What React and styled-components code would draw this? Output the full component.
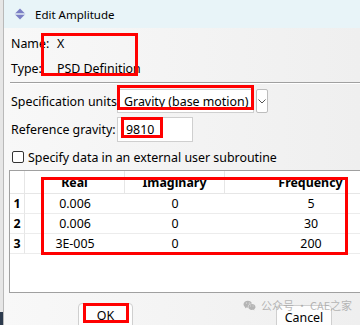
import styled, { createGlobalStyle } from "styled-components";
import { RiWechatFill } from "react-icons/ri";

const rows = [
  { id: 1, real: "0.006", imag: "0", freq: "5" },
  { id: 2, real: "0.006", imag: "0", freq: "30" },
  { id: 3, real: "3E-005", imag: "0", freq: "200" },
];

// red annotation boxes drawn over the dialog
const marks = [
  { top: 33, left: 41, width: 97, height: 43 },
  { top: 85, left: 117, width: 137, height: 25 },
  { top: 117, left: 121, width: 42, height: 21 },
  { top: 177, left: 41, width: 307, height: 78 },
  { top: 303, left: 83, width: 46, height: 20 },
];

const App = () => {
  return (
    <>
      <GlobalStyle />
      <Screen>
        <BackStrip />
        <Window>
          <TitleBar>
            <svg width="12" height="12" viewBox="0 0 12 12">
              <path d="M6 0.5 L11.5 6 L6 11.5 L0.5 6 Z" fill="#7b7fc4" />
              <path d="M0 6 H12" stroke="#e8f4f8" strokeWidth="1.4" />
            </svg>
            <span>Edit Amplitude</span>
          </TitleBar>

          <Info>
            <InfoRow>
              <Label>Name:</Label>
              <Value>X</Value>
            </InfoRow>
            <InfoRow>
              <Label>Type:</Label>
              <Value>PSD Definition</Value>
            </InfoRow>
          </Info>
          <Separator />

          <FieldRow>
            <FieldLabel>Specification units:</FieldLabel>
            <Combo>Gravity (base motion)</Combo>
            <ComboArrow>
              <svg width="8" height="5" viewBox="0 0 8 5">
                <path d="M0.5 0.5 L4 4 L7.5 0.5" fill="none" stroke="#555" strokeWidth="1" />
              </svg>
            </ComboArrow>
          </FieldRow>

          <FieldRow $gap={4}>
            <FieldLabel>Reference gravity:</FieldLabel>
            <TextInput>9810</TextInput>
          </FieldRow>

          <CheckRow>
            <CheckBox />
            <span>Specify data in an external user subroutine</span>
          </CheckRow>

          <Table>
            <HeadCell />
            <HeadCell>Real</HeadCell>
            <HeadCell>Imaginary</HeadCell>
            <HeadCell>Frequency</HeadCell>
            {rows.map((r) => (
              <Row key={r.id}>
                <RowNum>{r.id}</RowNum>
                <Cell>{r.real}</Cell>
                <Cell>{r.imag}</Cell>
                <Cell>{r.freq}</Cell>
              </Row>
            ))}
          </Table>

          <Buttons>
            <Button $width={55} $left={74}>OK</Button>
            <Button $width={56} $left={272} $top={2}>Cancel</Button>
          </Buttons>
        </Window>

        {marks.map((m, i) => (
          <Mark
            key={i}
            style={{ top: m.top, left: m.left, width: m.width, height: m.height }}
          />
        ))}

        <Watermark>
          <RiWechatFill size={13} />
          <span>公众号 · CAE之家</span>
        </Watermark>
      </Screen>
    </>
  );
};

const GlobalStyle = createGlobalStyle`
  * {
    margin: 0;
    padding: 0;
    box-sizing: border-box;
  }

  html, body {
    width: 360px;
    height: 325px;
    overflow: hidden;
    background: #dcdcdc;
    font-family: "Noto Sans", "Liberation Sans", sans-serif;
    font-size: 12.4px;
    color: #000;
  }
`;

const Screen = styled.div`
  position: relative;
  display: flex;
  width: 360px;
  height: 325px;
  overflow: hidden;
`;

const BackStrip = styled.div`
  width: 3px;
  flex-shrink: 0;
  background: linear-gradient(#e6e6e6 0, #e6e6e6 312px, #2d3b4e 312px);
`;

const Window = styled.div`
  flex: 1;
  display: flex;
  flex-direction: column;
  border-left: 1px solid #b9b9b9;
  background: linear-gradient(90deg, #f8f8f8, #efefef);
  overflow: hidden;
`;

const TitleBar = styled.div`
  height: 28px;
  flex-shrink: 0;
  display: flex;
  align-items: center;
  gap: 9px;
  padding-left: 10px;
  background: #e8f4f8;
  font-size: 11.5px;
`;

const Info = styled.div`
  padding: 3px 0 0 7px;
`;

const InfoRow = styled.div`
  height: 25px;
  display: flex;
  align-items: center;
`;

const Label = styled.span`
  width: 46px;
`;

const Value = styled.span`
  white-space: nowrap;
`;

const Separator = styled.div`
  margin: 1px 0 0 6px;
  height: 1px;
  background: #a0a0a0;
  box-shadow: 0 1px 0 #fff;
`;

const FieldRow = styled.div`
  display: flex;
  align-items: center;
  margin: ${(p) => p.$gap ?? 6}px 0 0 7px;
`;

const FieldLabel = styled.span`
  width: 106px;
  flex-shrink: 0;
  white-space: nowrap;
`;

const Combo = styled.div`
  width: 137px;
  height: 24px;
  display: flex;
  align-items: center;
  padding-left: 6px;
  white-space: nowrap;
  background: #fff;
  border: 1px solid #cfcfcf;
`;

const ComboArrow = styled.div`
  width: 12px;
  height: 24px;
  margin-left: 2px;
  display: flex;
  align-items: center;
  justify-content: center;
  background: #fff;
  border: 1px solid #bdbdbd;
  border-radius: 2px;
`;

const TextInput = styled.div`
  width: 76px;
  height: 25px;
  display: flex;
  align-items: center;
  padding-left: 8px;
  background: #fff;
  border: 1px solid #cfcfcf;
`;

const CheckRow = styled.div`
  height: 22px;
  margin: 4px 0 0 8px;
  display: flex;
  align-items: center;
  gap: 4px;
  white-space: nowrap;
`;

const CheckBox = styled.span`
  width: 12px;
  height: 12px;
  flex-shrink: 0;
  border: 1px solid #333;
  border-radius: 2px;
  background: #fff;
`;

const Table = styled.div`
  margin: 2px 0 0 5px;
  height: 123px;
  width: 400px;
  flex-shrink: 0;
  display: grid;
  grid-template-columns: 15px 100px 100px 172px;
  grid-template-rows: 23px repeat(3, 20px);
  align-content: start;
  background: #fff;
  border: 1px solid #a0a0a0;
  border-right: none;
`;

const HeadCell = styled.div`
  display: flex;
  align-items: center;
  justify-content: center;
  font-weight: 700;
  border-right: 1px solid #e6e6e6;
  border-bottom: 1px solid #e6e6e6;
`;

const Row = styled.div`
  display: contents;
`;

const Cell = styled.div`
  display: flex;
  align-items: center;
  justify-content: center;
  border-bottom: 1px solid #ececec;
`;

const RowNum = styled(Cell)`
  font-weight: 700;
  border-right: 1px solid #e6e6e6;
`;

const Buttons = styled.div`
  position: relative;
  flex: 1;
`;

const Button = styled.div`
  position: absolute;
  top: ${(p) => 10 + (p.$top ?? 0)}px;
  left: ${(p) => p.$left}px;
  width: ${(p) => p.$width}px;
  height: 26px;
  display: flex;
  align-items: center;
  justify-content: center;
  padding-bottom: 2px;
  background: #fdfdfd;
  border: 1px solid #cfcfcf;
  border-radius: 4px;
`;

const Mark = styled.div`
  position: absolute;
  border: 3px solid #ff0000;
  pointer-events: none;
`;

const Watermark = styled.div`
  position: absolute;
  top: 297px;
  left: 243px;
  display: flex;
  align-items: center;
  gap: 5px;
  color: rgba(160, 160, 160, 0.75);
  font-family: "Noto Sans CJK SC", "Noto Sans", sans-serif;
  font-size: 11px;
  pointer-events: none;
`;

export default App;
